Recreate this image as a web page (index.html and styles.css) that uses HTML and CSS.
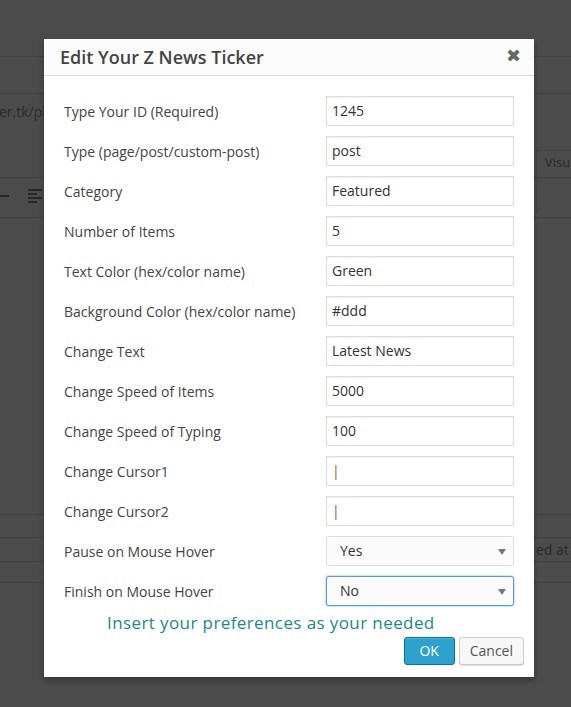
FILE: index.html
```html
<!DOCTYPE html>
<html>
<head>
<meta charset="utf-8">
<link rel="stylesheet" href="styles.css">
</head>
<body>
<div class="page">
  <div class="band band-top"></div>
  <div class="band band-url"></div>
  <div class="band band-path"><span class="url">er.tk/pl</span></div>
  <div class="band band-tools">
    <span class="tool-dash"></span>
    <span class="tool-align"><i></i><i class="short"></i><i></i><i class="short"></i></span>
  </div>
  <div class="band band-editor"></div>
  <div class="band band-a"></div>
  <div class="band band-status"><span class="saved">ed at 6:</span></div>
  <div class="band band-low"></div>
  <div class="band band-low2"></div>
  <div class="visual-tab">Visu</div>
</div>

<div class="modal">
  <div class="modal-head">
    <h1 class="modal-title">Edit Your Z News Ticker</h1>
    <span class="modal-close">&#x2716;</span>
  </div>
  <div class="modal-body">
    <div class="form">
      <label class="lbl">Type Your ID (Required)</label><div class="field">1245</div>
      <label class="lbl">Type (page/post/custom-post)</label><div class="field">post</div>
      <label class="lbl">Category</label><div class="field">Featured</div>
      <label class="lbl">Number of Items</label><div class="field">5</div>
      <label class="lbl">Text Color (hex/color name)</label><div class="field">Green</div>
      <label class="lbl">Background Color (hex/color name)</label><div class="field">#ddd</div>
      <label class="lbl">Change Text</label><div class="field">Latest News</div>
      <label class="lbl">Change Speed of Items</label><div class="field">5000</div>
      <label class="lbl">Change Speed of Typing</label><div class="field">100</div>
      <label class="lbl">Change Cursor1</label><div class="field cursor">|</div>
      <label class="lbl">Change Cursor2</label><div class="field cursor">|</div>
      <label class="lbl">Pause on Mouse Hover</label><div class="select">Yes<span class="arrow"></span></div>
      <label class="lbl">Finish on Mouse Hover</label><div class="select focus">No<span class="arrow"></span></div>
    </div>
    <p class="hint">Insert your preferences as your needed</p>
    <div class="actions">
      <button class="btn btn-primary">OK</button>
      <button class="btn">Cancel</button>
    </div>
  </div>
</div>
</body>
</html>
```

FILE: styles.css
```css
html, body {
  margin: 0;
  padding: 0;
}
body {
  width: 571px;
  height: 707px;
  overflow: hidden;
  background: #4b4b4b;
  font-family: "Open Sans", "Liberation Sans", sans-serif;
  position: relative;
}
.page {
  display: flex;
  flex-direction: column;
  height: 707px;
}
.band {
  border-bottom: 1px solid #424242;
  box-sizing: border-box;
  flex-shrink: 0;
}
.band-top { height: 57px; }
.band-url { height: 37px; }
.band-path {
  height: 84px;
  padding-top: 8px;
  font-size: 14px;
  color: #2c2c2c;
}
.url { margin-left: -1px; }
.band-tools {
  height: 40px;
  display: flex;
  align-items: center;
  gap: 19px;
  padding-bottom: 4px;
}
.tool-dash {
  width: 9px;
  height: 2px;
  background: #262626;
}
.tool-align {
  display: flex;
  flex-direction: column;
  gap: 2px;
  width: 14px;
}
.tool-align i {
  display: block;
  height: 2px;
  width: 14px;
  background: #262626;
}
.tool-align i.short { width: 9px; }
.band-editor { height: 297px; }
.band-a { height: 23px; }
.band-status {
  height: 24px;
  display: flex;
  align-items: center;
  padding-left: 536px;
  font-size: 14px;
  color: #2a2a2a;
  white-space: nowrap;
}
.band-low { height: 21px; }
.band-low2 { flex: 1; border-bottom: none; }
.visual-tab {
  position: absolute;
  left: 536px;
  top: 150px;
  width: 35px;
  height: 64px;
  box-sizing: border-box;
  overflow: hidden;
  white-space: nowrap;
  border-left: 1px solid #454545;
  border-top: 1px solid #454545;
  padding: 2px 0 0 8px;
  font-size: 13px;
  color: #2a2a2a;
}

.modal {
  position: absolute;
  left: 44px;
  top: 39px;
  width: 490px;
  height: 638px;
  background: #fff;
  box-shadow: 0 3px 6px rgba(0,0,0,0.3);
  display: flex;
  flex-direction: column;
}
.modal-head {
  height: 36px;
  border-bottom: 1px solid #dddddd;
  background: #fcfcfc;
  display: flex;
  align-items: center;
  justify-content: space-between;
  padding: 0 13px 0 16px;
}
.modal-title {
  margin: 0;
  font-size: 18px;
  font-weight: 600;
  color: #444;
  line-height: 36px;
}
.modal-close {
  font-size: 18px;
  line-height: 18px;
  color: #666;
  font-family: "DejaVu Sans", sans-serif;
  margin-top: -2px;
}
.modal-body {
  padding: 20px 20px 0 20px;
  display: flex;
  flex-direction: column;
}
.form {
  display: grid;
  grid-template-columns: 262px 188px;
  row-gap: 10px;
  align-items: center;
}
.lbl {
  font-size: 14px;
  color: #444;
}
.field {
  height: 30px;
  box-sizing: border-box;
  border: 1px solid #dddddd;
  box-shadow: inset 0 1px 2px rgba(0,0,0,0.07);
  padding: 0 5px;
  font-size: 14px;
  line-height: 28px;
  color: #333;
}
.field.cursor { color: #7a5a3a; }
.select {
  position: relative;
  height: 30px;
  box-sizing: border-box;
  border: 1px solid #dddddd;
  border-radius: 3px;
  background: #fbfbfb;
  padding: 0 13px;
  font-size: 14px;
  line-height: 28px;
  color: #333;
}
.select.focus {
  border-color: #5b9dd9;
  box-shadow: 0 0 2px rgba(30,140,190,0.8);
}
.arrow {
  position: absolute;
  right: 7px;
  top: 12px;
  width: 0;
  height: 0;
  border-left: 4px solid transparent;
  border-right: 4px solid transparent;
  border-top: 6px solid #777;
}
.hint {
  margin: 7px 0 0 43px;
  font-size: 17px;
  color: #1a8a85;
  letter-spacing: 0.4px;
  line-height: 20px;
}
.actions {
  display: flex;
  justify-content: flex-end;
  gap: 4px;
  margin-top: 4px;
  margin-right: -10px;
}
.btn {
  height: 28px;
  box-sizing: border-box;
  padding: 0 10px;
  font-family: "Open Sans", "Liberation Sans", sans-serif;
  font-size: 14px;
  line-height: 26px;
  color: #555;
  background: #f7f7f7;
  border: 1px solid #cccccc;
  border-radius: 3px;
  box-shadow: 0 1px 0 #ddd;
}
.btn-primary {
  width: 51px;
  background: #2ea2cc;
  border-color: #0074a2;
  color: #fff;
  box-shadow: inset 0 1px 0 rgba(120,200,230,0.5);
}
```
